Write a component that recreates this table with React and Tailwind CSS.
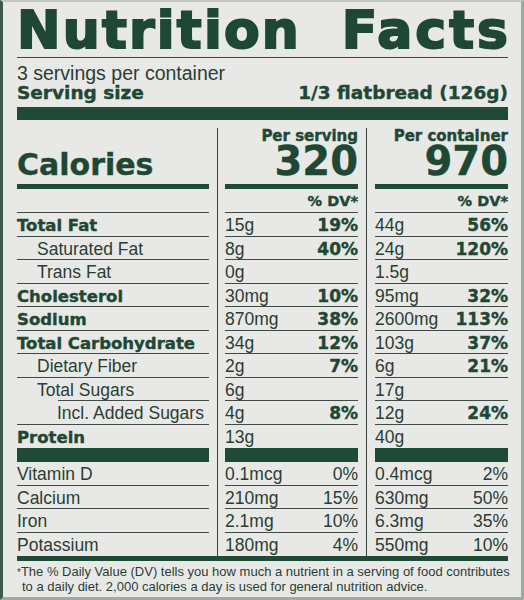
import React from 'react';

const nutrients = [
  { label: 'Total Fat', bold: true, a: '15g', ap: '19%', b: '44g', bp: '56%' },
  { label: 'Saturated Fat', indent: 1, a: '8g', ap: '40%', b: '24g', bp: '120%' },
  { label: 'Trans Fat', indent: 1, a: '0g', ap: '', b: '1.5g', bp: '' },
  { label: 'Cholesterol', bold: true, a: '30mg', ap: '10%', b: '95mg', bp: '32%' },
  { label: 'Sodium', bold: true, a: '870mg', ap: '38%', b: '2600mg', bp: '113%' },
  { label: 'Total Carbohydrate', bold: true, a: '34g', ap: '12%', b: '103g', bp: '37%' },
  { label: 'Dietary Fiber', indent: 1, a: '2g', ap: '7%', b: '6g', bp: '21%' },
  { label: 'Total Sugars', indent: 1, shortLine: true, a: '6g', ap: '', b: '17g', bp: '' },
  { label: 'Incl. Added Sugars', indent: 2, a: '4g', ap: '8%', b: '12g', bp: '24%' },
];

const vitamins = [
  { label: 'Vitamin D', a: '0.1mcg', ap: '0%', b: '0.4mcg', bp: '2%' },
  { label: 'Calcium', a: '210mg', ap: '15%', b: '630mg', bp: '50%' },
  { label: 'Iron', a: '2.1mg', ap: '10%', b: '6.3mg', bp: '35%' },
  { label: 'Potassium', a: '180mg', ap: '4%', b: '550mg', bp: '10%', last: true },
];

const heavy =
  "font-['DejaVu_Sans',sans-serif] font-bold text-[#1e4834] [-webkit-text-stroke:0.4px_#1e4834]";
const plain = "font-['Liberation_Sans',Arial,sans-serif] text-[#2a3d33]";

function Row({ label, bold, indent, shortLine, a, ap, b, bp, pctBold = true, line = true }) {
  const labelClass = bold
    ? `${heavy} text-[16.5px]`
    : `${plain} text-[17.5px]`;
  const pctClass = pctBold ? `${heavy} text-[17px]` : `${plain} text-[17.5px]`;
  return (
    <div className="grid grid-cols-[200px_149px_142px]">
      <div className="mr-2">
        <div
          className={`h-[23.5px] pt-px leading-[22px] whitespace-nowrap ${
            line ? 'border-b border-[#3f4a44]' : ''
          } ${shortLine ? 'border-b-0' : ''}`}
        >
          <span
            className={`${labelClass} ${
              indent === 1 ? 'pl-[20px]' : indent === 2 ? 'pl-[40px]' : ''
            }`}
          >
            {label}
          </span>
        </div>
        {shortLine && <div className="-mt-px ml-[41px] h-px bg-[#3f4a44]" />}
      </div>
      <div className="border-l border-[#3a4540] pl-[7px] pr-2">
        <div
          className={`flex h-[23.5px] justify-between pt-px leading-[22px] ${
            line ? 'border-b border-[#3f4a44]' : ''
          }`}
        >
          <span className={`${plain} text-[17.5px]`}>{a}</span>
          <span className={pctClass}>{ap}</span>
        </div>
      </div>
      <div className="border-l border-[#3a4540] pl-2">
        <div
          className={`flex h-[23.5px] justify-between pt-px leading-[22px] ${
            line ? 'border-b border-[#3f4a44]' : ''
          }`}
        >
          <span className={`${plain} text-[17.5px]`}>{b}</span>
          <span className={pctClass}>{bp}</span>
        </div>
      </div>
    </div>
  );
}

function ThickBar() {
  return (
    <div className="grid grid-cols-[200px_149px_142px]">
      <div className="mr-2 h-[14px] bg-[#1f4a35]" />
      <div className="border-l border-[#3a4540] pl-[7px] pr-2">
        <div className="h-[14px] bg-[#1f4a35]" />
      </div>
      <div className="border-l border-[#3a4540] pl-2">
        <div className="h-[14px] bg-[#1f4a35]" />
      </div>
    </div>
  );
}

export default function App() {
  return (
    <div className="h-[600px] w-[524px] overflow-hidden border-b-[3px] border-l-[3px] border-r-[3px] border-t-2 border-b-[#a3aaa5] border-l-[#3f5a4b] border-r-[#a0a7a2] border-t-[#c3c8c4] bg-[#e8e9e7] pl-[14px] pr-[13px]">
      {/* Title */}
      <div className="mt-[2px] flex h-[52px] justify-between font-['DejaVu_Sans',sans-serif] text-[52px] font-bold leading-[52px] tracking-[2.2px] text-[#1e4834] [-webkit-text-stroke:2px_#1e4834]">
        <span>Nutrition</span>
        <span className="-mr-[3px] tracking-[3px]">Facts</span>
      </div>
      <div className="mt-px h-px bg-[#3a4a41]" />

      <div className={`${plain} mt-[5px] text-[19.5px] leading-[20px]`}>
        3 servings per container
      </div>
      <div className={`${heavy} flex justify-between text-[18.5px] leading-[20px]`}>
        <span>Serving size</span>
        <span>1/3 flatbread (126g)</span>
      </div>
      <div className="mt-[4px] h-[13px] bg-[#1f4a35]" />

      {/* Table */}
      <div className="mt-[8px]">
        <div className="grid grid-cols-[200px_149px_142px]">
          <div className="mr-2 flex flex-col justify-end">
            <div className={`${heavy} mb-[4px] text-[30px] leading-[30px]`}>Calories</div>
            <div className="h-[5px] bg-[#1f4a35]" />
          </div>
          <div className="flex flex-col items-end border-l border-[#3a4540] pl-[7px] pr-2">
            <div className={`${heavy} text-[15px] leading-[16px]`}>Per serving</div>
            <div className={`${heavy} mt-px text-[40px] leading-[32px]`}>320</div>
            <div className="mt-[7px] h-[5px] w-full bg-[#1f4a35]" />
          </div>
          <div className="flex flex-col items-end border-l border-[#3a4540] pl-2">
            <div className={`${heavy} text-[15px] leading-[16px]`}>Per container</div>
            <div className={`${heavy} mt-px text-[40px] leading-[32px]`}>970</div>
            <div className="mt-[7px] h-[5px] w-full bg-[#1f4a35]" />
          </div>
        </div>

        <div className="grid grid-cols-[200px_149px_142px]">
          <div className="mr-2 h-[24px] border-b border-[#3f4a44]" />
          <div className="border-l border-[#3a4540] pl-[7px] pr-2">
            <div className={`${heavy} h-[24px] border-b border-[#3f4a44] pt-[3px] text-right text-[14.5px] leading-[18px]`}>
              % DV*
            </div>
          </div>
          <div className="border-l border-[#3a4540] pl-2">
            <div className={`${heavy} h-[24px] border-b border-[#3f4a44] pt-[3px] text-right text-[14.5px] leading-[18px]`}>
              % DV*
            </div>
          </div>
        </div>

        {nutrients.map((n) => (
          <Row key={n.label} {...n} />
        ))}
        <Row label="Protein" bold a="13g" ap="" b="40g" bp="" line={false} />
        <ThickBar />
        {vitamins.map((v) => (
          <Row key={v.label} {...v} pctBold={false} line={!v.last} />
        ))}
      </div>
      <div className="h-[5px] bg-[#1f4a35]" />

      <p
        className={`${plain} mt-[4px] whitespace-nowrap pl-[5px] -indent-[5px] text-[13px] leading-[14px]`}
      >
        <span className="text-[10px]">*</span>The % Daily Value (DV) tells you how much a nutrient in a serving of food contributes
        <br />
        to a daily diet. 2,000 calories a day is used for general nutrition advice.
      </p>
    </div>
  );
}
